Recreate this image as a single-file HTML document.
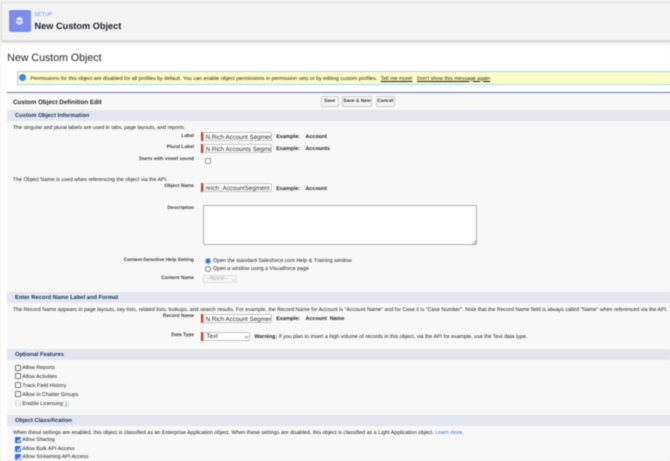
<!DOCTYPE html>
<html><head><meta charset="utf-8">
<style>
html,body{margin:0;padding:0;width:670px;height:461px;overflow:hidden;background:#f3f3f3}
#w{position:relative;width:670px;height:461px;overflow:hidden;font-family:"Liberation Sans",sans-serif;color:#222;filter:blur(.4px);text-rendering:geometricPrecision}
#w div,#w a{position:absolute;white-space:nowrap}
.t{font-size:5.3px;line-height:8px;color:#1c1c1c;margin-top:1px}
.l{font-size:4.83px;line-height:8px;font-weight:bold;color:#3c3c3c;text-align:right;width:120px;left:74px;margin-top:1px}
.b{font-size:5.35px;line-height:8px;font-weight:bold;color:#1c1c1c;word-spacing:1.4px;margin-top:1px}
.sec{left:7px;width:663px;height:10.7px;background:#e3e6ef}
.st{left:15px;font-size:5.77px;line-height:10.5px;font-weight:bold;color:#16325c;margin-top:1px}
.in{left:203px;width:68.5px;height:9px;background:#fff;border:.7px solid #c4c4c4;border-radius:2px;font-size:6.2px;line-height:9px;color:#2a2a2a;overflow:hidden;padding-left:1.6px;box-sizing:border-box}
.req{left:201.4px;width:1.8px;height:9px;background:#c23934}
.btn{top:96px;height:10.6px;box-sizing:border-box;background:#f6f6f6;border:.7px solid #ccc;border-radius:2px;font-size:4.8px;font-weight:bold;line-height:9.6px;text-align:center;color:#333}
.cb{left:15px;width:6px;height:6px;box-sizing:border-box;background:#fff;border:.6px solid #777;border-radius:1px}
.on{background:#2a72d4;border-color:#2a72d4}
.on svg{position:absolute;left:-.5px;top:-.5px}
</style></head><body><div id="w">
<div style="left:1px;top:2px;width:669px;height:37px;background:#f3f3f3;border:1px solid #dcdcdc;border-radius:2px;box-shadow:0 1px 1px #ccc"></div>
<div style="left:9px;top:10px;width:21.5px;height:21.5px;background:#7b8ceb;border-radius:2px"></div>
<svg style="position:absolute;left:15.2px;top:15.5px" width="9" height="10" viewBox="0 0 11 12"><path d="M5.5 1L10 3.2 5.5 5.4 1 3.2z" fill="#fff"/><path d="M1.2 5.6L5.5 7.6 9.8 5.6" fill="none" stroke="#fff" stroke-width="1.3"/><path d="M1.2 7.8L5.5 9.8 9.8 7.8" fill="none" stroke="#fff" stroke-width="1.3"/></svg>
<div style="left:34.3px;top:11.2px;font-size:5.4px;line-height:8px;color:#5b9ae0">SETUP</div>
<div style="left:34.5px;top:19px;font-size:9.2px;line-height:14px;font-weight:bold;color:#16202e">New Custom Object</div>

<div style="left:1px;top:45px;width:669px;height:416px;background:#fff"></div>
<div style="left:7.3px;top:50.2px;font-size:10.6px;line-height:16px;color:#222">New Custom Object</div>

<div style="left:16.5px;top:70.8px;width:654px;height:14.4px;box-sizing:border-box;background:#fdfdc9;border:1px solid #a9d3ee;border-right:0"></div>
<div style="left:19.2px;top:74.2px;width:7px;height:7px;border-radius:50%;background:#3b86d6"></div>
<div class="t" style="left:30.5px;top:73.5px">Permissions for this object are disabled for all profiles by default. You can enable object permissions in permission sets or by editing custom profiles.</div>
<div class="t" style="left:380.7px;top:73.5px;text-decoration:underline">Tell me more!</div>
<div class="t" style="left:417px;top:73.5px;text-decoration:underline">Don't show this message again</div>

<div style="left:7px;top:92px;width:663px;height:369px;background:#f8f8f8;border-top:1.5px solid #66779a;box-sizing:border-box"></div>
<div style="left:13px;top:97.5px;font-size:6.28px;line-height:9px;font-weight:bold;color:#222">Custom Object Definition Edit</div>
<div class="btn" style="left:321px;width:17.5px">Save</div>
<div class="btn" style="left:341.7px;width:30.6px">Save &amp; New</div>
<div class="btn" style="left:375.7px;width:19.3px">Cancel</div>

<div class="sec" style="top:110px"></div>
<div class="st" style="top:110px">Custom Object Information</div>
<div class="t" style="left:13px;top:123.3px">The singular and plural labels are used in tabs, page layouts, and reports.</div>

<div class="l" style="top:131.7px">Label</div>
<div class="req" style="top:132.2px"></div>
<div class="in" style="top:132.2px">N.Rich Account Segment</div>
<div class="b" style="left:276.2px;top:131.7px">Example:&nbsp; Account</div>

<div class="l" style="top:142.7px">Plural Label</div>
<div class="req" style="top:144.3px"></div>
<div class="in" style="top:144.3px">N.Rich Accounts Segments</div>
<div class="b" style="left:276.2px;top:144.3px">Example:&nbsp; Accounts</div>

<div class="l" style="top:155.3px">Starts with vowel sound</div>
<div class="cb" style="left:205px;top:158px;border-color:#999"></div>

<div class="t" style="left:13px;top:174.7px">The Object Name is used when referencing the object via the API.</div>
<div class="l" style="top:182px">Object Name</div>
<div class="req" style="top:183.3px"></div>
<div class="in" style="top:183.3px">nrich_AccountSegment</div>
<div class="b" style="left:276.2px;top:183.7px">Example:&nbsp; Account</div>

<div class="l" style="top:203.7px">Description</div>
<div style="left:203.3px;top:205px;width:273.5px;height:40px;box-sizing:border-box;background:#fff;border:.8px solid #b0b0b0;border-radius:2px"></div>
<svg style="position:absolute;left:472px;top:240px" width="5" height="5"><path d="M0 4.5L4.5 0M2.5 4.5L4.5 2.5" stroke="#888" stroke-width=".6"/></svg>

<div class="l" style="top:256px">Context-Sensitive Help Setting</div>
<div style="left:205.3px;top:258.3px;width:6px;height:6px;box-sizing:border-box;border-radius:50%;background:#2a72d4;border:.5px solid #7fb0ea"></div>
<div class="t" style="left:213px;top:256px">Open the standard Salesforce.com Help &amp; Training window</div>
<div style="left:205.3px;top:266.3px;width:6px;height:6px;box-sizing:border-box;border-radius:50%;background:#fff;border:.6px solid #777"></div>
<div class="t" style="left:213px;top:264px">Open a window using a Visualforce page</div>
<div class="l" style="top:273.7px">Content Name</div>
<div style="left:203.3px;top:275px;width:33.4px;height:8.3px;box-sizing:border-box;background:#f6f6f6;border:.7px solid #ddd;border-radius:1px;font-size:6px;line-height:7.4px;color:#aaa;padding-left:2px">--None--</div>
<svg style="position:absolute;left:230.5px;top:277.5px" width="5" height="4"><path d="M.5 .8L2.5 3 4.5 .8" fill="none" stroke="#bbb" stroke-width=".6"/></svg>

<div class="sec" style="top:292.3px"></div>
<div class="st" style="top:292.3px">Enter Record Name Label and Format</div>
<div class="t" style="left:13px;top:305px">The Record Name appears in page layouts, key lists, related lists, lookups, and search results. For example, the Record Name for Account is "Account Name" and for Case it is "Case Number". Note that the Record Name field is always called "Name" when referenced via the API.</div>
<div class="l" style="top:312.3px">Record Name</div>
<div class="req" style="top:313.7px"></div>
<div class="in" style="top:313.7px">N.Rich Account Segment</div>
<div class="b" style="left:276.2px;top:314px">Example:&nbsp; Account Name</div>

<div class="l" style="top:331px">Data Type</div>
<div class="req" style="top:332.4px"></div>
<div style="left:203.3px;top:332.4px;width:46.7px;height:8.6px;box-sizing:border-box;background:#fff;border:.7px solid #c4c4c4;border-radius:2px;font-size:6.2px;line-height:8.8px;color:#2a2a2a;padding-left:2.2px">Text</div>
<svg style="position:absolute;left:243.7px;top:335px" width="5" height="4"><path d="M.5 .8L2.5 3 4.5 .8" fill="none" stroke="#777" stroke-width=".6"/></svg>
<div class="t" style="left:254.4px;top:332.3px"><b>Warning:</b> If you plan to insert a high volume of records in this object, via the API for example, use the Text data type.</div>

<div class="sec" style="top:349.4px"></div>
<div class="st" style="top:349.2px">Optional Features</div>
<div class="cb" style="top:364.7px"></div><div class="t" style="left:22.3px;top:363.3px">Allow Reports</div>
<div class="cb" style="top:373.4px"></div><div class="t" style="left:22.3px;top:372.3px">Allow Activities</div>
<div class="cb" style="top:382.2px"></div><div class="t" style="left:22.3px;top:381px">Track Field History</div>
<div class="cb" style="top:391px"></div><div class="t" style="left:22.3px;top:390px">Allow in Chatter Groups</div>
<div class="cb" style="top:400px;background:#f2f2f2;border-color:#ddd"></div><div class="t" style="left:22.3px;top:399px">Enable Licensing</div>
<div style="left:63.3px;top:401px;width:6px;height:6px;box-sizing:border-box;background:#eef0f5;border:.5px solid #ddd;font-size:4.6px;line-height:5.5px;text-align:center;font-weight:bold;color:#3a7bd5">i</div>

<div class="sec" style="top:415px"></div>
<div class="st" style="top:415px">Object Classification</div>
<div class="t" style="left:13px;top:427.7px">When these settings are enabled, this object is classified as an Enterprise Application object. When these settings are disabled, this object is classified as a Light Application object. <span style="color:#3a78c9">Learn more.</span></div>
<div class="cb on" style="top:436.7px"><svg width="6" height="6"><path d="M1.2 3.2L2.6 4.6 5 1.5" fill="none" stroke="#fff" stroke-width="1"/></svg></div><div class="t" style="left:22.3px;top:435px">Allow Sharing</div>
<div class="cb on" style="top:445.5px"><svg width="6" height="6"><path d="M1.2 3.2L2.6 4.6 5 1.5" fill="none" stroke="#fff" stroke-width="1"/></svg></div><div class="t" style="left:22.3px;top:443.7px">Allow Bulk API Access</div>
<div class="cb on" style="top:454.2px"><svg width="6" height="6"><path d="M1.2 3.2L2.6 4.6 5 1.5" fill="none" stroke="#fff" stroke-width="1"/></svg></div><div class="t" style="left:22.3px;top:452.3px">Allow Streaming API Access</div>
</div></body></html>
